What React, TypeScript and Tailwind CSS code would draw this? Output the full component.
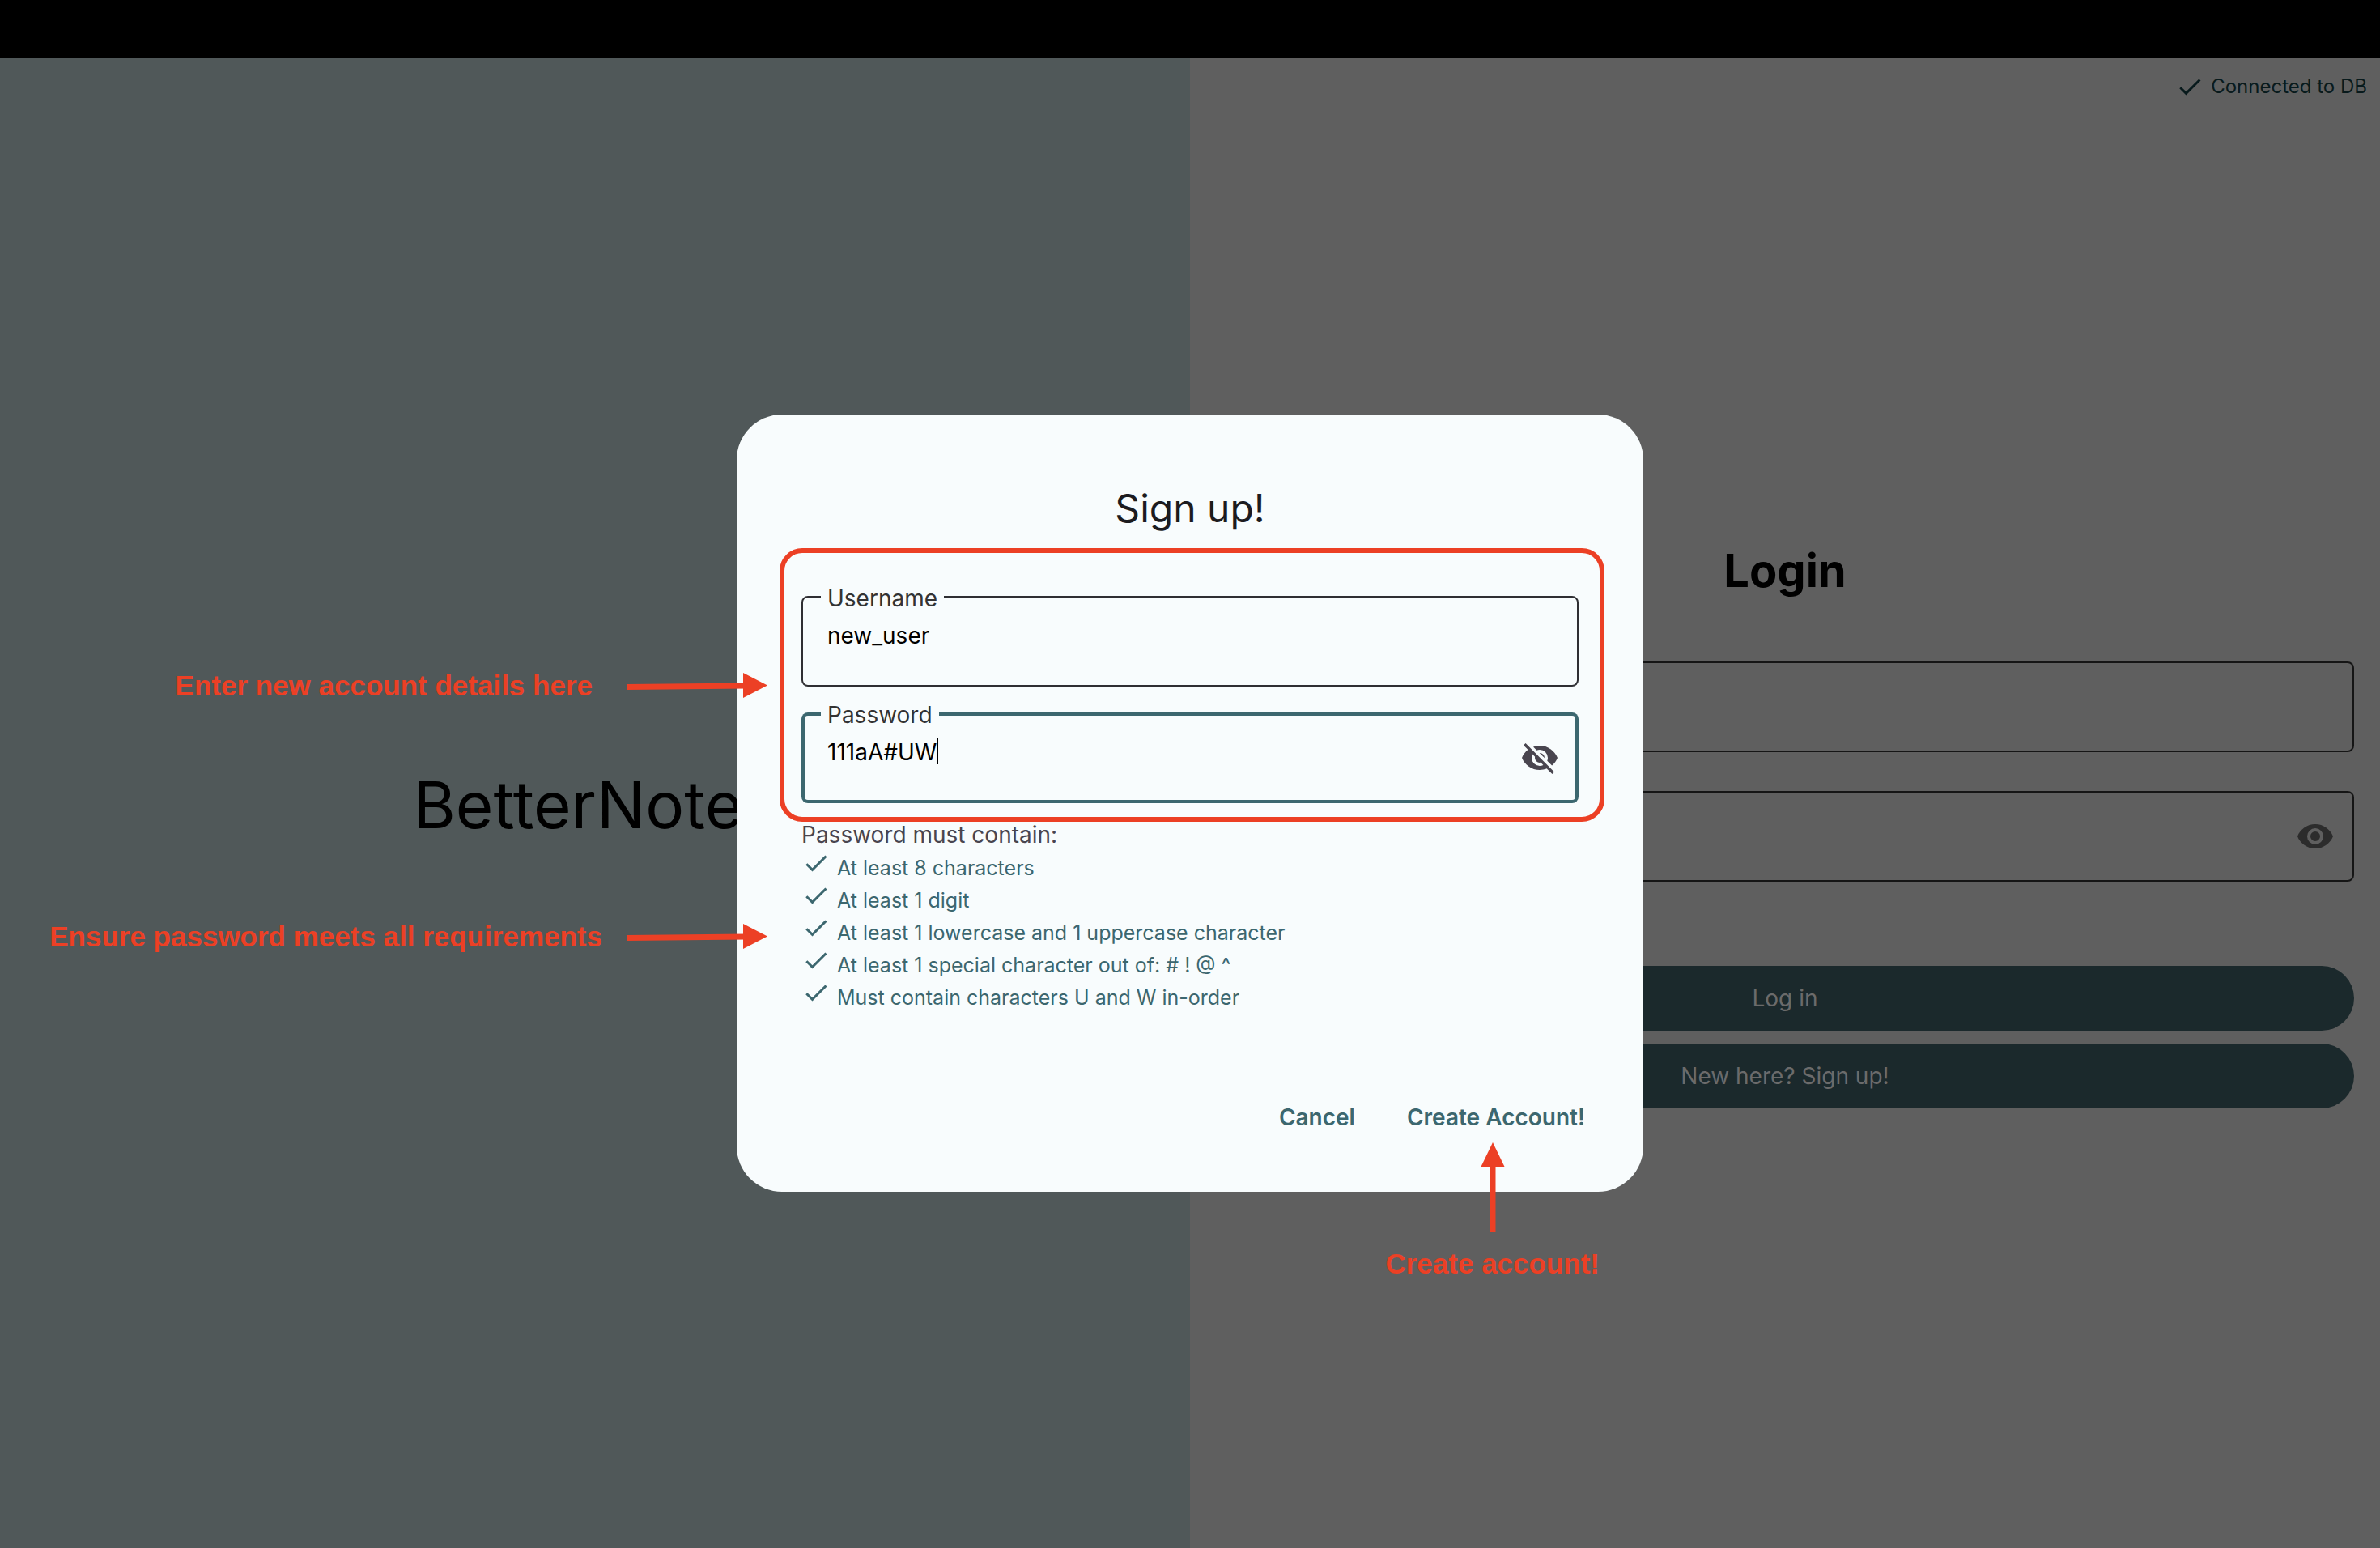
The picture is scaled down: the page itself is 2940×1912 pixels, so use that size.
import React from "react";

const CheckIcon = ({ className }: { className: string }) => (
  <svg viewBox="0 0 24 24" fill="currentColor" className={className} aria-hidden="true">
    <path d="M21 7 9 19l-5.5-5.5 1.41-1.41L9 16.17 19.59 5.59 21 7Z" />
  </svg>
);

const EyeIcon = () => (
  <svg viewBox="0 0 24 24" fill="currentColor" className="size-12" aria-hidden="true">
    <path d="M12 9a3 3 0 0 0-3 3 3 3 0 0 0 3 3 3 3 0 0 0 3-3 3 3 0 0 0-3-3m0 8a5 5 0 0 1-5-5 5 5 0 0 1 5-5 5 5 0 0 1 5 5 5 5 0 0 1-5 5m0-12.5C7 4.5 2.73 7.61 1 12c1.73 4.39 6 7.5 11 7.5s9.27-3.11 11-7.5c-1.73-4.39-6-7.5-11-7.5Z" />
  </svg>
);

const EyeOffIcon = () => (
  <svg viewBox="0 0 24 24" fill="currentColor" className="size-12" aria-hidden="true">
    <path d="M11.83 9 15 12.16V12a3 3 0 0 0-3-3h-.17m-4.3.8 1.55 1.55c-.05.21-.08.42-.08.65a3 3 0 0 0 3 3c.22 0 .44-.03.65-.08l1.55 1.55c-.67.33-1.41.53-2.2.53a5 5 0 0 1-5-5c0-.79.2-1.53.53-2.2M2 4.27l2.28 2.28.45.45C3.08 8.3 1.78 10 1 12c1.73 4.39 6 7.5 11 7.5 1.55 0 3.03-.3 4.38-.84l.43.42L19.73 22 21 20.73 3.27 3M12 7a5 5 0 0 1 5 5c0 .64-.13 1.26-.36 1.82l2.93 2.93c1.5-1.25 2.7-2.89 3.43-4.75-1.73-4.39-6-7.5-11-7.5-1.4 0-2.74.25-4 .7l2.17 2.15C10.74 7.13 11.35 7 12 7Z" />
  </svg>
);

const ArrowRight = () => (
  <svg viewBox="0 0 176 32" className="h-8 w-44 shrink-0" aria-hidden="true">
    <path d="M2 17.5 150 16" stroke="#ec4025" strokeWidth="7" />
    <path d="M146 0v31l30-15.5Z" fill="#ec4025" />
  </svg>
);

const ArrowUp = () => (
  <svg viewBox="0 0 32 112" className="h-28 w-8" aria-hidden="true">
    <path d="M16 28v83" stroke="#ec4025" strokeWidth="7" />
    <path d="M1 31h30L16 0Z" fill="#ec4025" />
  </svg>
);

const requirements = [
  "At least 8 characters",
  "At least 1 digit",
  "At least 1 lowercase and 1 uppercase character",
  "At least 1 special character out of: # ! @ ^",
  "Must contain characters U and W in-order",
];

const fieldLabel =
  "absolute left-6 -top-3 bg-[#f8fcfd] px-2 text-[28px] leading-[30px] text-[#333333]";

function LoginPanel() {
  return (
    <section className="relative flex flex-col justify-center bg-[#5f5f5f] px-8 pt-[54px]">
      <div className="absolute top-[15px] right-4 flex items-center gap-2 text-[#081a1c]">
        <CheckIcon className="size-9" />
        <span className="text-[24px] leading-10">Connected to DB</span>
      </div>
      <form className="flex flex-col" onSubmit={(e) => e.preventDefault()}>
        <h2 className="text-center text-[56px] leading-[72px] font-bold text-black">Login</h2>
        <input
          aria-label="Login username"
          className="mt-[76px] h-28 rounded-lg px-8 text-[28px] ring-2 ring-[#151515] ring-inset outline-none"
        />
        <div className="mt-12 flex h-28 items-center rounded-lg px-6 ring-2 ring-[#151515] ring-inset">
          <input
            type="password"
            aria-label="Login password"
            className="min-w-0 flex-1 text-[28px] outline-none"
          />
          <button type="button" aria-label="Show password" className="text-[#2c2c2c]">
            <EyeIcon />
          </button>
        </div>
        <button
          type="submit"
          className="mt-26 h-20 rounded-full bg-[#1b292c] text-[28px] text-[#6b6b6b]"
        >
          Log in
        </button>
        <button
          type="button"
          className="mt-4 h-20 rounded-full bg-[#1b292c] text-[28px] text-[#6b6b6b]"
        >
          New here? Sign up!
        </button>
      </form>
    </section>
  );
}

function SignUpDialog() {
  return (
    <div
      role="dialog"
      aria-labelledby="signup-title"
      className="relative flex w-[1120px] flex-col rounded-[56px] bg-[#f8fcfd] px-20 pt-21 pb-13"
    >
      <h1 id="signup-title" className="text-center text-[48px] leading-[64px] text-[#1c1b1f]">
        Sign up!
      </h1>
      <div className="relative mt-19 flex flex-col gap-8">
        <div className="relative flex h-28 rounded-lg pt-7 pl-8 ring-2 ring-[#2f2f33] ring-inset">
          <label htmlFor="username" className={fieldLabel}>
            Username
          </label>
          <input
            id="username"
            defaultValue="new_user"
            className="h-[42px] flex-1 text-[28px] text-black outline-none"
          />
        </div>
        <div className="relative flex h-28 rounded-lg pt-7 pl-8 ring-4 ring-[#3c676f] ring-inset">
          <label htmlFor="password" className={fieldLabel}>
            Password
          </label>
          <input
            id="password"
            defaultValue="111aA#UW"
            className="field-sizing-content h-[42px] text-[28px] text-black outline-none"
          />
          <span className="mt-1 h-8 w-[2px] bg-black" />
          <button
            type="button"
            aria-label="Hide password"
            className="mr-6 ml-auto h-14 text-[#49454f]"
          >
            <EyeOffIcon />
          </button>
        </div>
        <div className="pointer-events-none absolute -top-[59px] -right-8 -bottom-[23px] -left-[27px] rounded-[28px] border-6 border-[#ec4025]" />
      </div>
      <p className="mt-5.5 text-[28px] leading-[34px] text-[#49454f]">Password must contain:</p>
      <ul className="text-[#3c676f]">
        {requirements.map((item) => (
          <li key={item} className="flex h-10 gap-2">
            <CheckIcon className="size-9" />
            <span className="pt-1 text-[25px] leading-10">{item}</span>
          </li>
        ))}
      </ul>
      <div className="mt-23 -mr-8 flex justify-end gap-4 text-[28px] font-semibold text-[#3c676f]">
        <button type="button" className="h-20 px-6">
          Cancel
        </button>
        <button type="button" className="h-20 px-6">
          Create Account!
        </button>
      </div>

      <div className="absolute top-[313px] right-[1082px] flex items-center gap-10">
        <Callout>Enter new account details here</Callout>
        <ArrowRight />
      </div>
      <div className="absolute top-[623px] right-[1082px] flex items-center gap-7">
        <Callout>Ensure password meets all requirements</Callout>
        <ArrowRight />
      </div>
      <div className="absolute top-[899px] right-[54px] flex flex-col items-center gap-4">
        <ArrowUp />
        <Callout>Create account!</Callout>
      </div>
    </div>
  );
}

function Callout({ children }: { children: React.ReactNode }) {
  return (
    <span className="font-['Liberation_Sans',sans-serif] text-[35px] leading-[44px] font-bold whitespace-nowrap text-[#ec4025]">
      {children}
    </span>
  );
}

export default function App() {
  return (
    <div className="flex min-h-screen flex-col bg-black font-['Inter',sans-serif]">
      <header className="h-18" />
      <main className="relative grid flex-1 grid-cols-2">
        <section className="flex items-center justify-center bg-[#505859]">
          <p className="pt-1 text-[80px] leading-[96px] text-black">BetterNotes</p>
        </section>
        <LoginPanel />
        <div className="absolute inset-0 flex items-center justify-center">
          <SignUpDialog />
        </div>
      </main>
    </div>
  );
}
